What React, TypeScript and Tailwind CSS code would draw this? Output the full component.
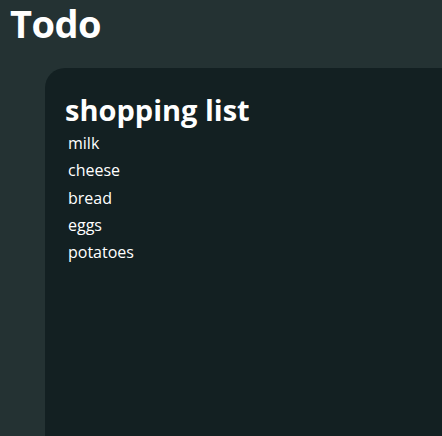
const ITEMS = ["milk", "cheese", "bread", "eggs", "potatoes"]

export default function App() {
  return (
    <div className="h-screen overflow-hidden bg-[#243233] text-white font-['Open_Sans','Noto_Sans',sans-serif]">
      <h1 className="pl-[10px] pt-[3px] text-[38px] font-bold leading-[40px] tracking-[-0.5px]">Todo</h1>
      <div className="ml-[45px] mt-[25px] min-h-[420px] rounded-tl-[20px] bg-[#132022] pl-[20px] pt-[23px]">
        <h2 className="text-[29px] font-bold leading-[38px]">shopping list</h2>
        <ul className="mt-[1px] pl-[3px]">
          {ITEMS.map(item => (
            <li key={item} className="text-[16px] leading-[27.3px]">{item}</li>
          ))}
        </ul>
      </div>
    </div>
  )
}
